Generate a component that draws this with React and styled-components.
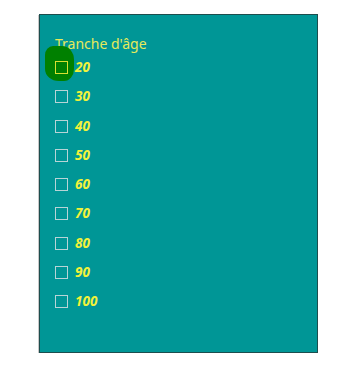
import React from "react";
import styled, { createGlobalStyle } from "styled-components";

const ages = [20, 30, 40, 50, 60, 70, 80, 90, 100];

const App = () => {
  return (
    <>
      <GlobalStyle />
      <Page>
        <Panel>
          <Title>Tranche d'âge</Title>
          <List>
            {ages.map((age, i) => (
              <Row key={age}>
                <Box $focused={i === 0}>
                  {i === 0 && <Focus />}
                </Box>
                <Label>{age}</Label>
              </Row>
            ))}
          </List>
        </Panel>
      </Page>
    </>
  );
};

export default App;

const GlobalStyle = createGlobalStyle`
  body {
    margin: 0;
    background: #fff;
    font-family: "Noto Sans", "Open Sans", sans-serif;
  }
`;

const Page = styled.div`
  padding: 14px 0 0 39px;
`;

const Panel = styled.div`
  box-sizing: border-box;
  width: 279px;
  height: 339px;
  background: #009696;
  border: 1px solid #1d4d4d;
  box-shadow: -1px 1px 0 #c8c8c8;
  padding: 20px 0 0 15px;
`;

const Title = styled.div`
  color: #e6ea5a;
  font-size: 14px;
  line-height: 18px;
  margin-bottom: 8px;
`;

const List = styled.div`
  display: flex;
  flex-direction: column;
  gap: 16.3px;
`;

const Row = styled.div`
  display: flex;
  align-items: center;
  gap: 7px;
  height: 13px;
`;

const Box = styled.div`
  position: relative;
  box-sizing: border-box;
  width: 13px;
  height: 13px;
  border: 1px solid ${(p) => (p.$focused ? "#d8e030" : "#b8d4d6")};
  background: ${(p) => (p.$focused ? "#008000" : "transparent")};
`;

const Focus = styled.span`
  position: absolute;
  left: -11px;
  top: -16px;
  width: 29px;
  height: 35px;
  background: #008000;
  border-radius: 8px 12px 10px 14px / 9px 14px 12px 12px;
  &::after {
    content: "";
    position: absolute;
    left: 10px;
    top: 15px;
    width: 11px;
    height: 11px;
    border: 1px solid #d8e030;
  }
`;

const Label = styled.span`
  color: #f2f23a;
  font-size: 13.5px;
  font-weight: 700;
  font-style: italic;
  line-height: 13px;
`;
